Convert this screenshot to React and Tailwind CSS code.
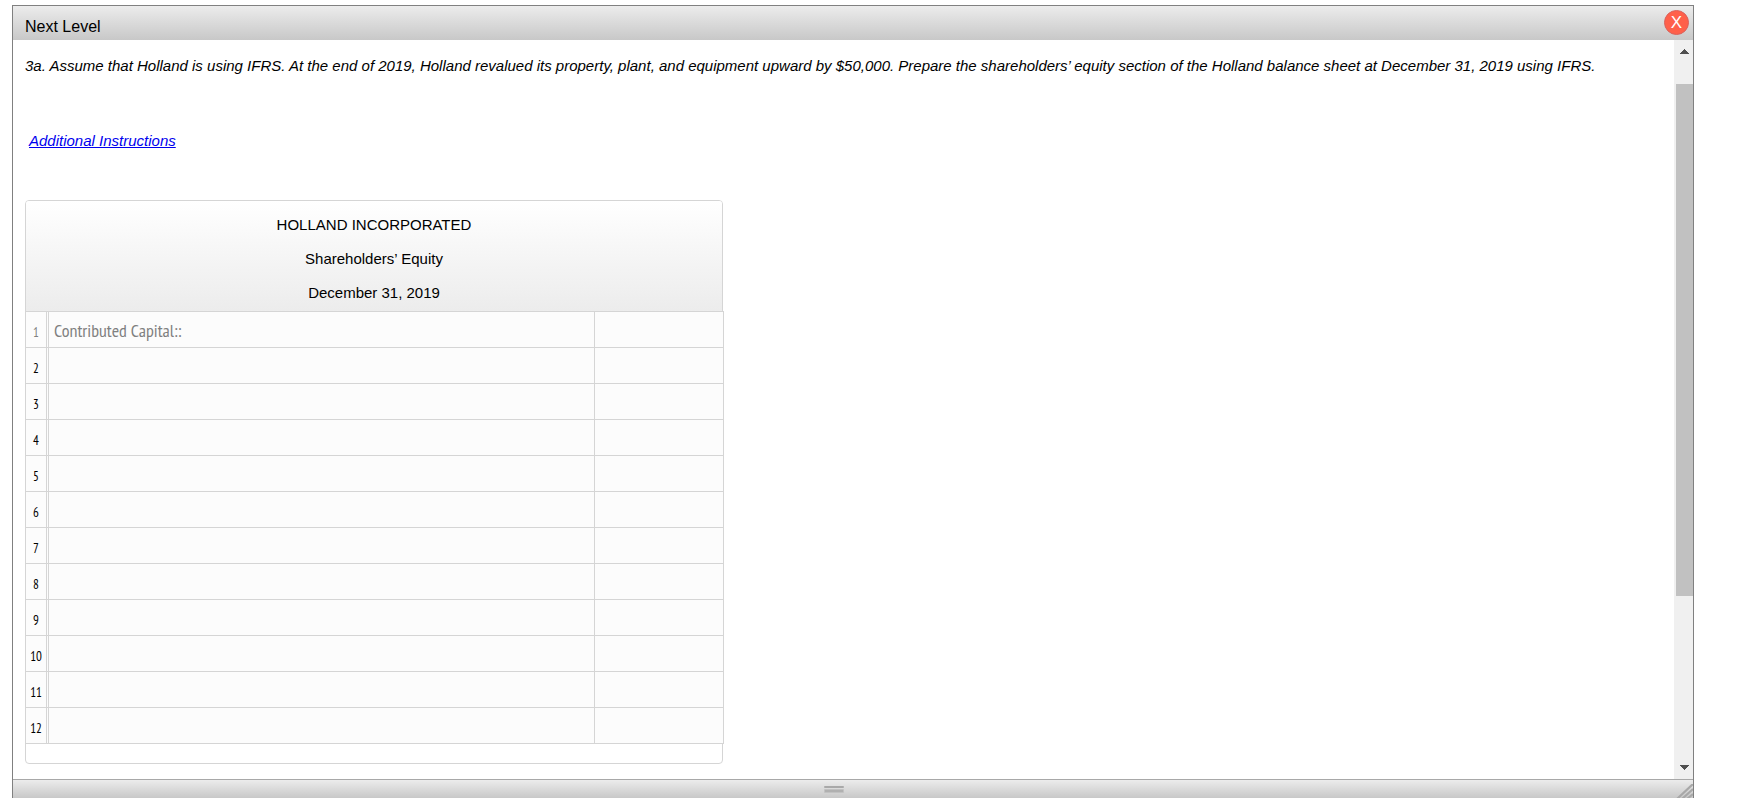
const rows = ["Contributed Capital::", "", "", "", "", "", "", "", "", "", "", ""];

function TitleBar() {
  return (
    <header className="flex h-[34px] shrink-0 items-start justify-between bg-linear-to-b from-[#ececec] to-[#c8c8c8] pt-1 pr-1 pl-3">
      <h1 className="pt-[5px] text-base leading-6">Next Level</h1>
      <button
        type="button"
        aria-label="Close"
        className="flex size-[25px] items-center justify-center rounded-full border border-[#d9625c] bg-[#ff604a] pb-px text-[17px] leading-none text-white"
      >
        X
      </button>
    </header>
  );
}

function EquityTable() {
  return (
    <section className="w-[698px] rounded border border-[#d5d5d5] pb-[19px]">
      <div className="flex h-[110px] flex-col items-center rounded-t-[3px] bg-linear-to-b from-white to-[#ececec] pt-[7px] text-[15px] leading-[34px]">
        <p>HOLLAND INCORPORATED</p>
        <p>Shareholders’ Equity</p>
        <p>December 31, 2019</p>
      </div>
      <table className="-mr-px -ml-px w-[699px] table-fixed border-separate border-spacing-0 border-t border-l border-[#d5d5d5] font-['PT_Sans_Narrow',Lato,sans-serif]">
        <colgroup>
          <col className="w-[23px]" />
          <col />
          <col className="w-[129px]" />
        </colgroup>
        <tbody>
          {rows.map((label, i) => (
            <tr key={i} className={i === 0 ? "text-[#808080]" : "text-black"}>
              <th
                scope="row"
                className="h-9 border-r-3 border-b border-double border-[#d5d5d5] [border-bottom-style:solid] bg-[#fcfcfc] p-0 pt-[6px] text-center text-[13px] leading-4 font-normal"
              >
                {i + 1}
              </th>
              <td className="h-9 border-r border-b border-[#d5d5d5] bg-[#fcfcfc] p-0">
                <input
                  type="text"
                  aria-label={`Row ${i + 1} description`}
                  defaultValue={label}
                  readOnly={i === 0}
                  className="block h-[35px] w-full bg-transparent px-[5px] pt-[2px] text-lg outline-none"
                />
              </td>
              <td className="h-9 border-r border-b border-[#d5d5d5] bg-[#fcfcfc] p-0">
                <input
                  type="text"
                  aria-label={`Row ${i + 1} amount`}
                  readOnly={i === 0}
                  className="block h-[35px] w-full bg-transparent px-[5px] pt-[2px] text-right text-lg outline-none"
                />
              </td>
            </tr>
          ))}
        </tbody>
      </table>
    </section>
  );
}

function ScrollRail() {
  return (
    <div className="flex w-[19px] shrink-0 flex-col bg-[#f0f0f0] pt-[9px] pb-[9px] pl-[2px]" aria-hidden="true">
      <svg className="shrink-0 self-center" width="9" height="5" viewBox="0 0 9 5" fill="#505050" shapeRendering="crispEdges">
        <path d="M0 5V4H1V3H2V2H3V1H4V0H5V1H6V2H7V3H8V4H9V5Z" />
      </svg>
      <div className="flex min-h-0 flex-1 flex-col">
        <div className="grow-[30]" />
        <div className="grow-[512] bg-[#c1c1c1]" />
        <div className="grow-[169]" />
      </div>
      <svg className="shrink-0 self-center" width="9" height="5" viewBox="0 0 9 5" fill="#505050" shapeRendering="crispEdges">
        <path d="M0 0V1H1V2H2V3H3V4H4V5H5V4H6V3H7V2H8V1H9V0Z" />
      </svg>
    </div>
  );
}

function ResizeBar() {
  return (
    <footer className="flex h-[19px] shrink-0 border-t border-[#a8a8a8] bg-linear-to-b from-[#ececec] to-[#c8c8c8]">
      <div className="flex flex-1 justify-center pt-[6px] pr-[22px]">
        <svg width="20" height="7" viewBox="0 0 20 7" aria-hidden="true">
          <rect width="20" height="2" rx="1" fill="#a9a9a9" />
          <rect y="3" width="20" height="4" rx="1" fill="#c1c1c1" />
          <rect x="1" y="4" width="18" height="2" fill="#b0b0b0" />
        </svg>
      </div>
      <svg className="mt-1" width="17" height="14" viewBox="0 0 17 14" aria-hidden="true">
        <path d="M1 15L17 0M6 15L17 5M11 15L17 10" stroke="#a8a8a8" strokeWidth="2.200" fill="none" />
      </svg>
    </footer>
  );
}

export default function App() {
  return (
    <div className="flex h-screen overflow-hidden bg-white pt-[5px] pr-[53px] pl-3 font-['Liberation_Sans',Arial,sans-serif] text-black">
      <div role="dialog" aria-label="Next Level" className="flex min-w-0 flex-1 flex-col border border-b-0 border-[#808080]">
        <TitleBar />
        <div className="flex min-h-0 flex-1">
          <main className="min-w-0 flex-1 overflow-hidden px-3 pt-4">
            <p className="text-[15px] leading-5 italic">
              3a. Assume that Holland is using IFRS. At the end of 2019, Holland revalued its property, plant, and equipment upward by $50,000. Prepare the shareholders’ equity section of the Holland balance sheet at December 31, 2019 using IFRS.
            </p>
            <p className="mt-[55px] mb-[49px] pl-1 text-[15px] leading-5 italic">
              <a href="#instructions" className="text-[#0000ee] underline">Additional Instructions</a>
            </p>
            <EquityTable />
          </main>
          <ScrollRail />
        </div>
        <ResizeBar />
      </div>
    </div>
  );
}
